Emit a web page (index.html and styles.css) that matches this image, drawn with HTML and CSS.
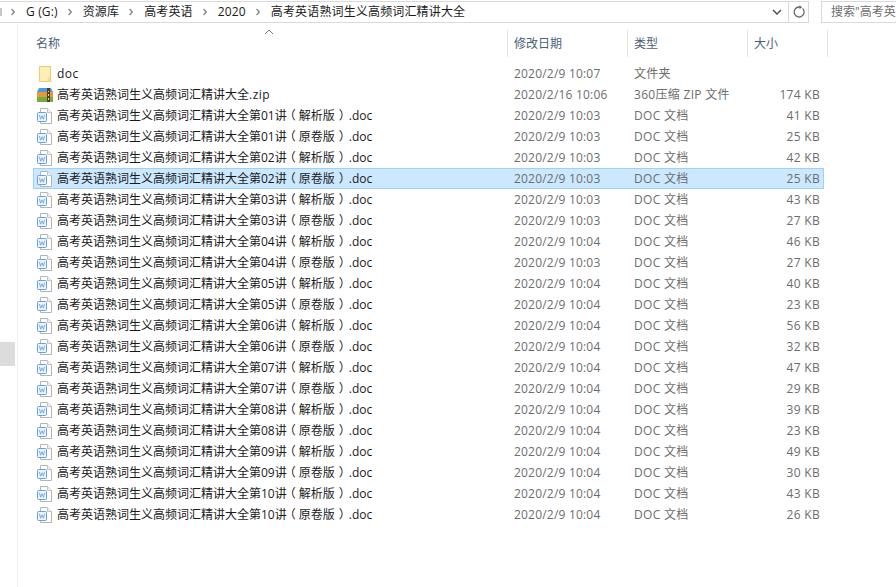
FILE: index.html
```html
<!DOCTYPE html>
<html lang="zh-CN">
<head>
<meta charset="utf-8">
<title>高考英语熟词生义高频词汇精讲大全</title>
<link rel="stylesheet" href="styles.css">
</head>
<body>
<svg class="defs" width="0" height="0" aria-hidden="true">
  <symbol id="doc" viewBox="0 0 16 16">
    <path d="M3.5 .5H10.5L14.5 4.5V15.5H3.5Z" fill="#fff" stroke="#b4b4b4"/>
    <path d="M10.5 .5V4.5H14.5" fill="#f3f3f3" stroke="#c4c4c4"/>
    <rect x=".5" y="4.5" width="9" height="9" rx="1" fill="#eef5fe" stroke="#62a0ee"/>
    <path d="M2.4 6.8L3.6 11.2L5 7.8L6.4 11.2L7.6 6.8" fill="none" stroke="#5b9bea" stroke-width=".8"/>
  </symbol>
  <symbol id="chev" viewBox="0 0 4 8">
    <path d="M.6 1L3.2 4L.6 7" fill="none" stroke="#8a8a8a" stroke-width="1.4"/>
  </symbol>
</svg>
<header class="toolbar">
  <nav class="address">
    <span class="frag"></span>
    <svg class="chev" width="4" height="8"><use href="#chev"/></svg><span class="crumb">G (G:)</span>
    <svg class="chev" width="4" height="8"><use href="#chev"/></svg><span class="crumb">资源库</span>
    <svg class="chev" width="4" height="8"><use href="#chev"/></svg><span class="crumb">高考英语</span>
    <svg class="chev" width="4" height="8"><use href="#chev"/></svg><span class="crumb">2020</span>
    <svg class="chev" width="4" height="8"><use href="#chev"/></svg><span class="crumb">高考英语熟词生义高频词汇精讲大全</span>
    <span class="drop"><svg width="10" height="6" viewBox="0 0 10 6"><path d="M1 1L5 5L9 1" fill="none" stroke="#555" stroke-width="1.5"/></svg></span>
    <span class="refresh"><svg width="14" height="14" viewBox="0 0 14 14"><path d="M10.6 3.4A5 5 0 1 1 7 2H8.5" fill="none" stroke="#666" stroke-width="1.3"/><path d="M7.5 .2L10 2.2L7.5 4.2Z" fill="#666"/></svg></span>
  </nav>
  <div class="search">搜索"高考英语熟词生义</div>
</header>
<div class="body">
  <aside class="tree"><div class="thumb"></div></aside>
  <main class="list">
    <svg class="sort" width="10" height="6" viewBox="0 0 10 6"><path d="M1 5L5 1L9 5" fill="none" stroke="#777"/></svg>
    <div class="head">
      <div class="h hname">名称</div>
      <div class="h hdate">修改日期</div>
      <div class="h htype">类型</div>
      <div class="h hsize">大小</div>
    </div>
    <div class="rows">
      <div class="row"><svg class="ic folder" width="12" height="16" viewBox="0 0 12 16"><path d="M.5 .5H11.5V15.5H.5Z" fill="#fdeaa6" stroke="#e9cd73"/><path d="M1.5 1.5H10.5V14.5H1.5Z" fill="#feefba"/><path d="M9 12H11.5V15.5H9Z" fill="#fbe08a" stroke="#e9cd73" stroke-width=".6"/></svg><span class="name"><span class="ext">doc</span></span><span class="date">2020/2/9 10:07</span><span class="type">文件夹</span><span class="size"></span></div>
      <div class="row"><svg class="ic" width="16" height="16" viewBox="0 0 16 16"><path d="M2 1H14L16 5H0Z" fill="#4b9be0"/><rect y="5" width="16" height="5" fill="#e9973a"/><rect y="10" width="16" height="5" fill="#6fb03c"/><rect x="10" y="1" width="3" height="14" fill="#5a3d1e"/><rect x="11" y="4" width="1" height="1" fill="#e8d48a"/><rect x="11" y="7" width="1" height="2" fill="#e8d48a"/><rect x="11" y="11" width="1" height="2" fill="#e8d48a"/></svg><span class="name">高考英语熟词生义高频词汇精讲大全<span class="ext">.zip</span></span><span class="date">2020/2/16 10:06</span><span class="type">360压缩 ZIP 文件</span><span class="size">174 KB</span></div>
      <div class="row"><svg class="ic" width="16" height="16"><use href="#doc"/></svg><span class="name">高考英语熟词生义高频词汇精讲大全第01讲<span class="po">（</span>解析版<span class="pc">）</span>.doc</span><span class="date">2020/2/9 10:03</span><span class="type">DOC 文档</span><span class="size">41 KB</span></div>
      <div class="row"><svg class="ic" width="16" height="16"><use href="#doc"/></svg><span class="name">高考英语熟词生义高频词汇精讲大全第01讲<span class="po">（</span>原卷版<span class="pc">）</span>.doc</span><span class="date">2020/2/9 10:03</span><span class="type">DOC 文档</span><span class="size">25 KB</span></div>
      <div class="row"><svg class="ic" width="16" height="16"><use href="#doc"/></svg><span class="name">高考英语熟词生义高频词汇精讲大全第02讲<span class="po">（</span>解析版<span class="pc">）</span>.doc</span><span class="date">2020/2/9 10:03</span><span class="type">DOC 文档</span><span class="size">42 KB</span></div>
      <div class="row sel"><svg class="ic" width="16" height="16"><use href="#doc"/></svg><span class="name">高考英语熟词生义高频词汇精讲大全第02讲<span class="po">（</span>原卷版<span class="pc">）</span>.doc</span><span class="date">2020/2/9 10:03</span><span class="type">DOC 文档</span><span class="size">25 KB</span></div>
      <div class="row"><svg class="ic" width="16" height="16"><use href="#doc"/></svg><span class="name">高考英语熟词生义高频词汇精讲大全第03讲<span class="po">（</span>解析版<span class="pc">）</span>.doc</span><span class="date">2020/2/9 10:03</span><span class="type">DOC 文档</span><span class="size">43 KB</span></div>
      <div class="row"><svg class="ic" width="16" height="16"><use href="#doc"/></svg><span class="name">高考英语熟词生义高频词汇精讲大全第03讲<span class="po">（</span>原卷版<span class="pc">）</span>.doc</span><span class="date">2020/2/9 10:03</span><span class="type">DOC 文档</span><span class="size">27 KB</span></div>
      <div class="row"><svg class="ic" width="16" height="16"><use href="#doc"/></svg><span class="name">高考英语熟词生义高频词汇精讲大全第04讲<span class="po">（</span>解析版<span class="pc">）</span>.doc</span><span class="date">2020/2/9 10:04</span><span class="type">DOC 文档</span><span class="size">46 KB</span></div>
      <div class="row"><svg class="ic" width="16" height="16"><use href="#doc"/></svg><span class="name">高考英语熟词生义高频词汇精讲大全第04讲<span class="po">（</span>原卷版<span class="pc">）</span>.doc</span><span class="date">2020/2/9 10:03</span><span class="type">DOC 文档</span><span class="size">27 KB</span></div>
      <div class="row"><svg class="ic" width="16" height="16"><use href="#doc"/></svg><span class="name">高考英语熟词生义高频词汇精讲大全第05讲<span class="po">（</span>解析版<span class="pc">）</span>.doc</span><span class="date">2020/2/9 10:04</span><span class="type">DOC 文档</span><span class="size">40 KB</span></div>
      <div class="row"><svg class="ic" width="16" height="16"><use href="#doc"/></svg><span class="name">高考英语熟词生义高频词汇精讲大全第05讲<span class="po">（</span>原卷版<span class="pc">）</span>.doc</span><span class="date">2020/2/9 10:04</span><span class="type">DOC 文档</span><span class="size">23 KB</span></div>
      <div class="row"><svg class="ic" width="16" height="16"><use href="#doc"/></svg><span class="name">高考英语熟词生义高频词汇精讲大全第06讲<span class="po">（</span>解析版<span class="pc">）</span>.doc</span><span class="date">2020/2/9 10:04</span><span class="type">DOC 文档</span><span class="size">56 KB</span></div>
      <div class="row"><svg class="ic" width="16" height="16"><use href="#doc"/></svg><span class="name">高考英语熟词生义高频词汇精讲大全第06讲<span class="po">（</span>原卷版<span class="pc">）</span>.doc</span><span class="date">2020/2/9 10:04</span><span class="type">DOC 文档</span><span class="size">32 KB</span></div>
      <div class="row"><svg class="ic" width="16" height="16"><use href="#doc"/></svg><span class="name">高考英语熟词生义高频词汇精讲大全第07讲<span class="po">（</span>解析版<span class="pc">）</span>.doc</span><span class="date">2020/2/9 10:04</span><span class="type">DOC 文档</span><span class="size">47 KB</span></div>
      <div class="row"><svg class="ic" width="16" height="16"><use href="#doc"/></svg><span class="name">高考英语熟词生义高频词汇精讲大全第07讲<span class="po">（</span>原卷版<span class="pc">）</span>.doc</span><span class="date">2020/2/9 10:04</span><span class="type">DOC 文档</span><span class="size">29 KB</span></div>
      <div class="row"><svg class="ic" width="16" height="16"><use href="#doc"/></svg><span class="name">高考英语熟词生义高频词汇精讲大全第08讲<span class="po">（</span>解析版<span class="pc">）</span>.doc</span><span class="date">2020/2/9 10:04</span><span class="type">DOC 文档</span><span class="size">39 KB</span></div>
      <div class="row"><svg class="ic" width="16" height="16"><use href="#doc"/></svg><span class="name">高考英语熟词生义高频词汇精讲大全第08讲<span class="po">（</span>原卷版<span class="pc">）</span>.doc</span><span class="date">2020/2/9 10:04</span><span class="type">DOC 文档</span><span class="size">23 KB</span></div>
      <div class="row"><svg class="ic" width="16" height="16"><use href="#doc"/></svg><span class="name">高考英语熟词生义高频词汇精讲大全第09讲<span class="po">（</span>解析版<span class="pc">）</span>.doc</span><span class="date">2020/2/9 10:04</span><span class="type">DOC 文档</span><span class="size">49 KB</span></div>
      <div class="row"><svg class="ic" width="16" height="16"><use href="#doc"/></svg><span class="name">高考英语熟词生义高频词汇精讲大全第09讲<span class="po">（</span>原卷版<span class="pc">）</span>.doc</span><span class="date">2020/2/9 10:04</span><span class="type">DOC 文档</span><span class="size">30 KB</span></div>
      <div class="row"><svg class="ic" width="16" height="16"><use href="#doc"/></svg><span class="name">高考英语熟词生义高频词汇精讲大全第10讲<span class="po">（</span>解析版<span class="pc">）</span>.doc</span><span class="date">2020/2/9 10:04</span><span class="type">DOC 文档</span><span class="size">43 KB</span></div>
      <div class="row"><svg class="ic" width="16" height="16"><use href="#doc"/></svg><span class="name">高考英语熟词生义高频词汇精讲大全第10讲<span class="po">（</span>原卷版<span class="pc">）</span>.doc</span><span class="date">2020/2/9 10:04</span><span class="type">DOC 文档</span><span class="size">26 KB</span></div>
    </div>
  </main>
</div>
</body>
</html>
```
FILE: styles.css
```css
* { box-sizing: border-box; }
html, body { margin: 0; padding: 0; }
body {
  width: 896px; height: 587px; overflow: hidden; background: #fff;
  font-family: "Open Sans", "Noto Sans CJK SC", sans-serif;
  font-size: 12px; line-height: 16px; color: #1a1a1a;
}
.defs { position: absolute; }
.toolbar { display: flex; height: 24px; padding-top: 1px; }
.address {
  width: 809px; height: 22px; display: flex; align-items: center;
  border: 1px solid #d9d9d9; border-left: 0;
}
.frag { width: 2px; height: 8px; background: #c8c8c8; margin-right: 9px; flex: none; }
.chev { flex: none; margin-right: 11px; }
.crumb { margin-right: 10px; white-space: nowrap; letter-spacing: .15px; }
.drop { margin-left: auto; width: 22px; display: flex; justify-content: center; }
.refresh {
  width: 20px; height: 20px; border-left: 1px solid #d9d9d9;
  display: flex; align-items: center; justify-content: center;
}
.search {
  margin-left: 12px; flex: 1; height: 22px; border: 1px solid #d9d9d9; border-right: 0;
  padding-left: 9px; color: #6d6d6d; white-space: nowrap; overflow: hidden; line-height: 20px;
}
.body { display: flex; height: 563px; }
.tree { width: 18px; border-right: 1px solid #f0f0f0; padding-top: 318px; }
.thumb { width: 15px; height: 24px; background: #dcdcdc; }
.list { position: relative; flex: 1; padding: 6px 0 0 15px; }
.sort { position: absolute; left: 246px; top: 5px; }
.head { display: flex; height: 27px; color: #4c607a; }
.h { border-right: 1px solid #e5e5e5; padding: 6px 0 0 6px; flex: none; }
.hname { width: 475px; padding-left: 3px; }
.hdate { width: 120px; }
.htype { width: 120px; }
.hsize { width: 80px; }
.rows { margin-top: 6px; width: 791px; }
.row { display: flex; align-items: center; height: 21px; border: 1px solid transparent; white-space: nowrap; color: #6d6d6d; }
.row.sel { background: #cce8ff; border-color: #99d1ff; }
.ic { flex: none; margin-left: 3px; margin-right: 4px; }
.folder { margin-left: 5px; margin-right: 6px; }
.name { width: 457px; flex: none; color: #1a1a1a; }
.ext { letter-spacing: .5px; }
.po, .pc { font-feature-settings: "halt"; }
.po { padding: 0 3px; }
.pc { padding: 0 4px; }
.date { width: 120px; flex: none; letter-spacing: .2px; }
.type { width: 110px; flex: none; letter-spacing: .3px; }
.size { width: 76px; flex: none; text-align: right; letter-spacing: .3px; }
```
